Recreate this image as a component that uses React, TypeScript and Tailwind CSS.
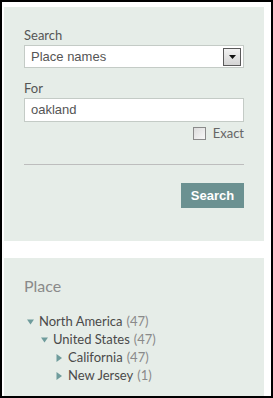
import React from 'react';

interface TreeNode {
  name: string;
  count: number;
  level: number;
  open: boolean;
}

const tree: TreeNode[] = [
  { name: 'North America', count: 47, level: 0, open: true },
  { name: 'United States', count: 47, level: 1, open: true },
  { name: 'California', count: 47, level: 2, open: false },
  { name: 'New Jersey', count: 1, level: 2, open: false },
];

const indent = ['pl-[23px]', 'pl-[37px]', 'pl-[52px]'];

function Caret({ open }: { open: boolean }) {
  return open ? (
    <svg width="7" height="6" viewBox="0 0 7 6" className="shrink-0">
      <path d="M0 0.5h7L3.5 5.5z" fill="#6f9c9c" />
    </svg>
  ) : (
    <svg width="6" height="8" viewBox="0 0 6 8" className="shrink-0">
      <path d="M0.5 0L6 4L0.5 8z" fill="#6f9c9c" />
    </svg>
  );
}

export default function App() {
  return (
    <div className="w-[273px] h-[398px] border-2 border-black bg-white pt-[5px] pl-[2px] overflow-hidden font-['Lato','Open_Sans',sans-serif]">
      {/* search panel */}
      <div className="w-[260px] bg-[#e6ede8] pl-[20px] pr-[20px] pt-[20px] pb-[33px]">
        <div className="h-[18px] leading-[16px] text-[13px] text-[#555]">Search</div>
        <div className="relative h-[23px] border border-[#c4cbc6] bg-white flex items-center pl-[6px] font-['Liberation_Sans',Arial,sans-serif] text-[13px] text-[#555]">
          Place names
          <div className="absolute right-[2px] top-[2px] w-[18px] h-[18px] border border-[#5a5a5a] bg-gradient-to-b from-[#f2f2f2] to-[#d4d4d4] flex items-center justify-center">
            <svg width="7" height="4" viewBox="0 0 7 4">
              <path d="M0 0h7L3.5 4z" fill="#111" />
            </svg>
          </div>
        </div>
        <div className="mt-[12px] h-[18px] leading-[16px] text-[13px] text-[#555]">For</div>
        <div className="h-[24px] border border-[#c4cbc6] bg-white flex items-center pl-[6px] font-['Liberation_Sans',Arial,sans-serif] text-[13px] text-[#555]">
          oakland
        </div>
        <div className="mt-[2px] h-[18px] flex items-center justify-end gap-[7px]">
          <div className="w-[13px] h-[13px] border border-[#8a8a8a] bg-gradient-to-br from-[#dcdcdc] to-[#f8f8f8]" />
          <span className="text-[13px] text-[#666] leading-[16px]">Exact</span>
        </div>
        <div className="mt-[22px] border-t border-[#bdbdbd]" />
        <div className="mt-[18px] flex justify-end">
          <button className="w-[63px] h-[25px] bg-[#6b9191] text-white font-bold text-[13px] font-['Liberation_Sans',Arial,sans-serif]">
            Search
          </button>
        </div>
      </div>

      {/* place facet */}
      <div className="mt-[17px] w-[260px] h-[140px] bg-[#e6ede8] pt-[18px]">
        <div className="pl-[20px] h-[20px] leading-[20px] text-[16px] text-[#8a8a8a]">Place</div>
        <div className="mt-[17px]">
          {tree.map((n) => (
            <div key={n.name} className={`h-[18px] flex items-center ${indent[n.level]} text-[13px]`}>
              <div className="w-[12px] flex items-center">
                <Caret open={n.open} />
              </div>
              <span className="text-[#4a4a4a]">{n.name}</span>
              <span className="ml-[4px] text-[#8a8a8a]">({n.count})</span>
            </div>
          ))}
        </div>
      </div>
    </div>
  );
}
